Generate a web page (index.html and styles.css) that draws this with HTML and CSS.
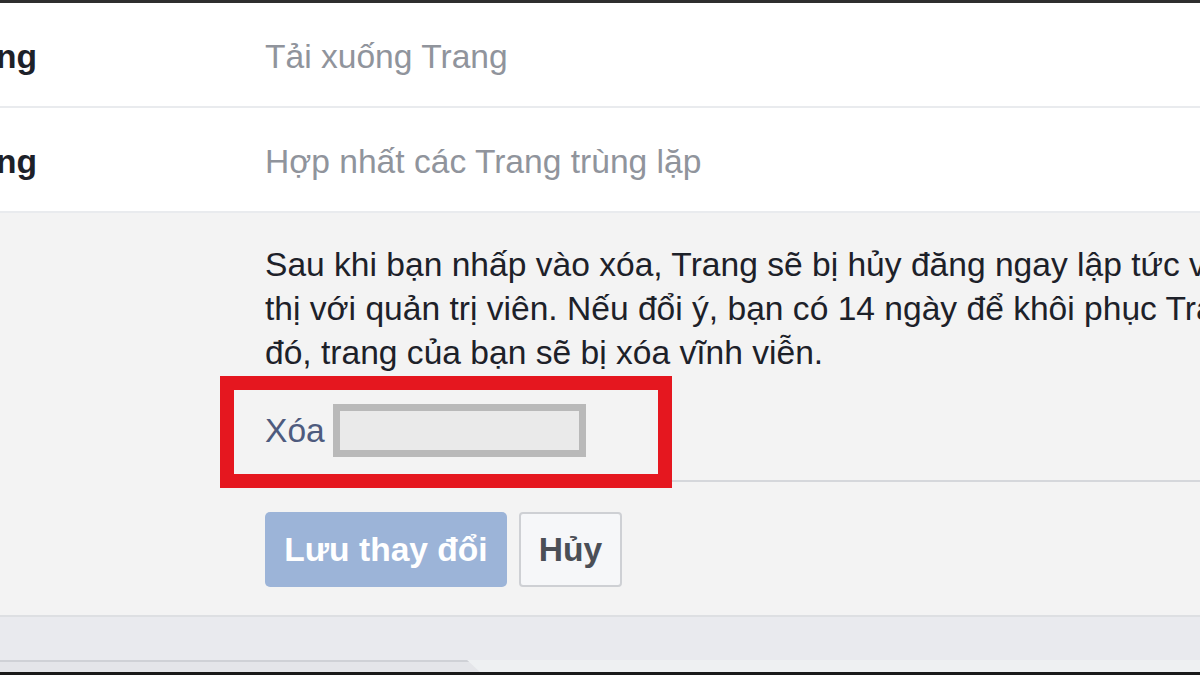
FILE: index.html
```html
<!DOCTYPE html>
<html lang="vi">
<head>
  <meta charset="UTF-8">
  <meta name="viewport" content="width=device-width, initial-scale=1">
  <title>Cài đặt chung - Xóa Trang</title>
  <link rel="stylesheet" href="styles.css">
</head>
<body>

  <div class="top-bar"></div>

  <div class="row">
    <div class="row-label">ng</div>
    <div class="row-value">Tải xuống Trang</div>
  </div>

  <div class="row row-last">
    <div class="row-label">ng</div>
    <div class="row-value">Hợp nhất các Trang trùng lặp</div>
  </div>

  <div class="panel">
    <div class="panel-body">
      <p class="note">
        <span class="note-line">Sau khi bạn nhấp vào xóa, Trang sẽ bị hủy đăng ngay lập tức và</span>
        <span class="note-line">thị với quản trị viên. Nếu đổi ý, bạn có 14 ngày để khôi phục Trang.</span>
        <span class="note-line">đó, trang của bạn sẽ bị xóa vĩnh viễn.</span>
      </p>

      <div class="field">
        <label class="field-label" for="xoa">Xóa</label>
        <input type="text" id="xoa" class="field-input">
      </div>

      <div class="actions">
        <button class="btn btn-save">Lưu thay đổi</button>
        <button class="btn btn-cancel">Hủy</button>
      </div>
    </div>

    <!-- khung đỏ đánh dấu -->
    <div class="highlight"></div>
  </div>

  <div class="band"></div>
  <div class="tab-strip">
    <div class="tab"></div>
  </div>
  <div class="bottom-bar"></div>

</body>
</html>
```

FILE: styles.css
```css
* { box-sizing: border-box; }
body {
  margin: 0;
  font-family: 'Liberation Sans', Arial, sans-serif;
  font-size: 33.6px;
  line-height: 44px;
  background: #fff;
  color: #1d2129;
  overflow: hidden;
  height: 675px;
}

.top-bar {
  height: 3px;
  background: #2e2e2e;
  box-shadow: 0 1px 2px rgba(0,0,0,0.15);
}

.row {
  display: grid;
  grid-template-columns: 265px 1fr;
  padding: 32px 0 27px;
  border-bottom: 2px solid #e9ebee;
  background: #fff;
}

.row-label {
  font-weight: bold;
  margin-left: -4px;
  color: #1d2129;
}

.row-value {
  color: #90949c;
  white-space: nowrap;
}

.panel {
  position: relative;
  background: #f3f3f3;
  border-bottom: 2px solid #dddfe2;
}

.panel-body {
  padding: 30px 0 28px 265px;
}

.note {
  margin: 0;
}

.note-line {
  display: block;
  white-space: nowrap;
}

.field {
  display: flex;
  align-items: center;
  padding: 29px 0 23px;
  border-bottom: 2px solid #d5d7db;
}

.field-label {
  color: #4e5b7e;
}

.field-input {
  width: 253px;
  height: 53px;
  margin-left: 8px;
  border: 7px solid #b9b9b9;
  background: #eaeaea;
  padding: 0;
}

.actions {
  display: flex;
  gap: 12px;
  margin-top: 30px;
}

.btn {
  height: 75px;
  font-family: inherit;
  font-size: 33.6px;
  font-weight: bold;
  border-radius: 5px;
  cursor: pointer;
}

.btn-save {
  width: 242px;
  padding: 0 19px;
  background: #9cb4d8;
  color: #fff;
  border: none;
}

.btn-cancel {
  width: 103px;
  padding: 0 16px;
  background: #f6f7f9;
  color: #4b4f56;
  border: 2px solid #ced0d4;
  border-radius: 4px;
}

.highlight {
  position: absolute;
  left: 220px;
  top: 163px;
  width: 452px;
  height: 112px;
  border: 14px solid #e5171f;
}

.band {
  height: 43px;
  background: #e9eaee;
}

.tab-strip {
  height: 12px;
  background: #eef0f2;
}

.tab {
  width: 480px;
  height: 12px;
  background: #e4e5e9;
  border-top: 2px solid #cfd1d6;
  clip-path: polygon(0 0, 467px 0, 480px 100%, 0 100%);
}

.bottom-bar {
  height: 3px;
  background: #1a1a1a;
}
```
